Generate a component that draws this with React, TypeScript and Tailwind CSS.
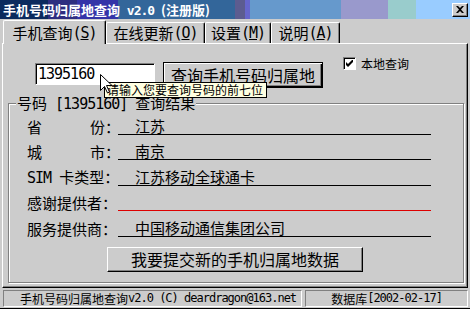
import type { ReactNode } from "react";

const cjk = "font-['Noto_Sans_CJK_SC',sans-serif]";

// half-width latin text, SimSun style cells
function Lat({ children, className = "" }: { children: ReactNode; className?: string }) {
  return <span className={`font-['DejaVu_Sans_Mono',monospace] tracking-[-1px] ${className}`}>{children}</span>;
}

function Tab({ label, hot, active, width }: { label: string; hot: string; active?: boolean; width: string }) {
  return (
    <div
      className={`${width} ${
        active ? "h-[24px] -mb-px relative z-10" : "h-[21px]"
      } flex items-center justify-center bg-[#cccccc] border-t border-l border-r border-t-white border-l-white border-r-black rounded-t-[2px] shadow-[inset_-1px_0_0_#808080] text-[15px] leading-[16px] text-black`}
    >
      <span>{label}</span>
      <Lat>
        (<span className="underline">{hot}</span>)
      </Lat>
    </div>
  );
}

function Row({ label, value, red }: { label: ReactNode; value: string; red?: boolean }) {
  return (
    <div className="h-[25.5px] flex items-end pl-[18px]">
      <div className="w-[91px] shrink-0 text-[15px] leading-[16px] whitespace-nowrap">{label}</div>
      <div
        className={`w-[313px] h-[20px] flex items-end pl-[17px] text-[15px] leading-[16px] border-b ${
          red ? "border-[#dd0000]" : "border-black"
        }`}
      >
        {value}
      </div>
    </div>
  );
}

function Spread({ a, b }: { a: string; b: string }) {
  return (
    <div className="flex justify-between w-[93px]">
      <span>{a}</span>
      <span>{b}</span>
    </div>
  );
}

export default function App() {
  return (
    <div className={`${cjk} relative w-[470px] h-[309px] bg-[#cccccc] flex flex-col overflow-hidden border-b border-black text-black`}>
      {/* title bar */}
      <div className="h-[19px] shrink-0 flex items-center justify-between bg-[linear-gradient(to_right,#0b2b5e_0_48px,#2e2e80_48px_77px,#3434a8_77px_118px,#33669a_118px_235px,#5c5c90_235px_245px,#6666cc_245px_250px,#6699cc_250px_341px,#9999cc_341px_388px,#99cccc_388px_416px,#99ccff_416px)]">
        <div className="pl-[3px] text-[13px] leading-[15px] font-bold text-white whitespace-nowrap">
          手机号码归属地查询<Lat className="font-bold"> v2.0 </Lat> (注册版)
        </div>
        <button className="mr-[2px] w-[16px] h-[14px] flex items-center justify-center bg-[#cccccc] border border-t-white border-l-white border-r-black border-b-black shadow-[inset_-1px_-1px_0_#808080]">
          <svg width="8" height="7" viewBox="0 0 8 7">
            <path d="M0 0h2l2 2 2-2h2L5 3.5 8 7H6L4 5 2 7H0l3-3.5z" fill="#000" />
          </svg>
        </button>
      </div>

      {/* tabs */}
      <div className="h-[24px] shrink-0 flex items-end pl-[3px]">
        <Tab label="手机查询" hot="S" active width="w-[103px]" />
        <Tab label="在线更新" hot="O" width="w-[99px]" />
        <Tab label="设置" hot="M" width="w-[66px]" />
        <Tab label="说明" hot="A" width="w-[69px]" />
      </div>

      {/* tab page */}
      <div className="ml-[2px] w-[466px] h-[245px] shrink-0 border border-t-white border-l-white border-r-black border-b-black shadow-[inset_-1px_-1px_0_#808080] flex flex-col">
        <div className="mt-[13px] h-[31px] flex items-start">
          <div className="ml-[32px] mt-[6px] w-[120px] h-[22px] bg-white border border-t-[#808080] border-l-[#808080] border-b-white border-r-white shadow-[inset_1px_1px_0_#000] flex items-center pl-[2px] text-[15px] leading-[16px]">
            <Lat>1395160</Lat>
          </div>
          <button className="ml-[8px] mt-[5px] w-[160px] h-[26px] border border-black bg-[#cccccc] shadow-[inset_1px_1px_0_#fff,inset_-1px_-1px_0_#000,inset_-2px_-2px_0_#808080] text-[16px] leading-[18px] pb-px">
            查询手机号码归属地
          </button>
          <div className="ml-[20px] flex items-center gap-[5px]">
            <div className="w-[13px] h-[13px] bg-white border border-t-[#808080] border-l-[#808080] border-b-white border-r-white shadow-[inset_1px_1px_0_#000] flex items-center justify-center">
              <svg width="7" height="7" viewBox="0 0 7 7">
                <path d="M0 2v3l2 2 5-5V-1L2 4z" fill="#000" />
              </svg>
            </div>
            <span className="text-[12px] leading-[13px]">本地查询</span>
          </div>
        </div>

        {/* group box */}
        <div className="relative mt-[15px] ml-[5px] w-[456px] h-[180px] border border-[#808080] shadow-[1px_1px_0_#fff,inset_1px_1px_0_#fff] flex flex-col pt-[5px]">
          <div className="absolute -top-[9px] left-[7px] px-px bg-[#cccccc] text-[15px] leading-[16px] whitespace-nowrap">
            号码<Lat> [1395160] </Lat>查询结果
          </div>
          <Row label={<Spread a="省" b="份：" />} value="江苏" />
          <Row label={<Spread a="城" b="市：" />} value="南京" />
          <Row
            label={
              <span>
                <Lat>SIM </Lat>卡类型：
              </span>
            }
            value="江苏移动全球通卡"
          />
          <Row label="感谢提供者：" value="" red />
          <Row label="服务提供商：" value="中国移动通信集团公司" />
          <button className="mt-[10px] ml-[98px] w-[256px] h-[25px] bg-[#cccccc] border border-t-white border-l-white border-r-black border-b-black shadow-[inset_-1px_-1px_0_#808080] text-[16px] leading-[18px]">
            我要提交新的手机归属地数据
          </button>
        </div>
      </div>

      {/* status bar */}
      <div className="mt-[2px] h-[17px] shrink-0 flex gap-[3px] pl-[3px] text-[12px] leading-[13px]">
        <div className="w-[299px] h-full border border-t-[#808080] border-l-[#808080] border-b-white border-r-white flex items-center pl-[16px] whitespace-nowrap">
          手机号码归属地查询<Lat className="tracking-[-1.2px]">v2.0 (C) deardragon@163.net</Lat>
        </div>
        <div className="w-[163px] h-full border border-t-[#808080] border-l-[#808080] border-b-white border-r-white flex items-center justify-center whitespace-nowrap">
          数据库<Lat className="tracking-[-1.2px]">[2002-02-17]</Lat>
        </div>
      </div>

      {/* tooltip + mouse pointer over the page */}
      <div className="absolute left-[104px] top-[82px] w-[163px] h-[16px] bg-[#ffffe1] border border-black text-[12px] leading-[14px] pl-[2px] whitespace-nowrap z-20">
        请输入您要查询号码的前七位
      </div>
      <svg className="absolute left-[100px] top-[74px] z-30" width="12" height="20" viewBox="0 0 12 20">
        <path d="M0.5 0.5v16l4-4 3 6.5 2-1-3-6.5h5.5z" fill="#fff" stroke="#000" strokeWidth="1" />
      </svg>
    </div>
  );
}
